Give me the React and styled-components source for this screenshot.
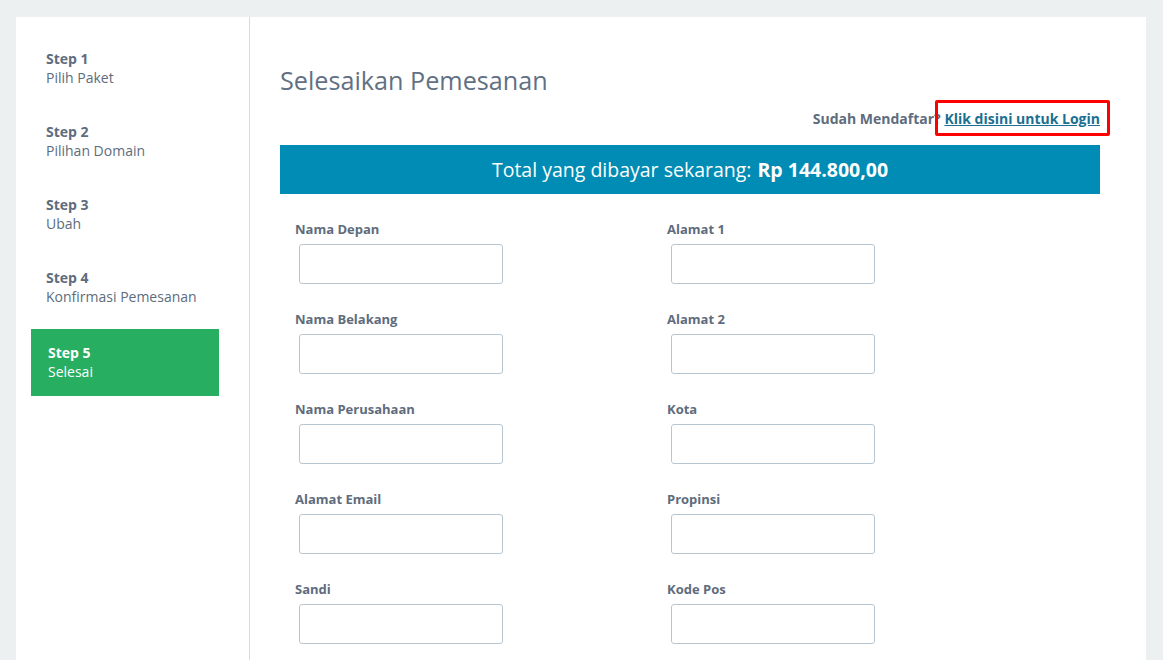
import styled, { createGlobalStyle } from "styled-components";

const GlobalStyle = createGlobalStyle`
    html, body {
        margin: 0;
        padding: 0;
        background-color: #ecf0f1;
        font-family: "Open Sans", "Noto Sans", "Liberation Sans", sans-serif;
        color: #5e6c7d;
    }
    * {
        box-sizing: border-box;
    }
`;

const Page = styled.div`
    padding: 17px 17px 0 16px;
    height: 660px;
    overflow: hidden;
`;
const Panel = styled.div`
    display: flex;
    background-color: #fff;
    min-height: 643px;
`;
const Sidebar = styled.nav`
    width: 234px;
    flex-shrink: 0;
    border-right: 1px solid #d8dadb;
    padding-top: 17px;
`;
const StepItem = styled.div`
    margin: ${(props) => props.$active ? '9px 15px 6px' : '0 15px 6px'};
    padding: ${(props) => props.$active ? '14px 17px 15px' : '15px 15px 14px'};
    width: 188px;
    height: 67px;
    background-color: ${(props) => props.$active ? '#27ae60' : 'transparent'};
    color: ${(props) => props.$active ? '#fff' : '#5e6c7d'};
    font-size: 14px;
    line-height: 19px;
`;
const StepNum = styled.div`
    font-weight: 700;
`;
const Main = styled.main`
    flex: 1;
    padding: 45px 46px 0 30px;
`;
const Title = styled.h1`
    margin: 0;
    font-size: 25.2px;
    font-weight: 400;
    line-height: 36px;
    color: #627083;
`;
const LoginRow = styled.div`
    margin-top: 11px;
    text-align: right;
    font-size: 14px;
    line-height: 20px;
    font-weight: 700;
    color: #5e6c7d;
`;
const LoginLink = styled.a`
    position: relative;
    color: #1a6f92;
    text-decoration: underline;
    &::after {
        content: '';
        position: absolute;
        top: -9px;
        bottom: -8px;
        left: -9px;
        right: -10px;
        border: 3px solid #f00;
        border-radius: 2px;
    }
`;
const TotalBar = styled.div`
    margin-top: 16px;
    height: 49px;
    background-color: #008cb4;
    color: #fff;
    font-size: 19.5px;
    display: flex;
    align-items: center;
    justify-content: center;
    & > b {
        font-weight: 700;
        margin-left: 6px;
    }
`;
const Form = styled.form`
    display: grid;
    grid-template-columns: 372px 372px;
    row-gap: 26px;
    padding: 26px 15px 0;
`;
const Field = styled.div`
    display: flex;
    flex-direction: column;
    align-items: flex-start;
`;
const Label = styled.label`
    font-size: 13px;
    font-weight: 700;
    line-height: 18px;
    color: #5e6c7d;
    margin-bottom: 6px;
`;
const Input = styled.input`
    margin-left: 4px;
    width: 204px;
    height: 40px;
    border: 1px solid #b8c6d1;
    border-radius: 3px;
    background: #fff;
    outline: none;
`;

const steps = [
    { num: 'Step 1', name: 'Pilih Paket' },
    { num: 'Step 2', name: 'Pilihan Domain' },
    { num: 'Step 3', name: 'Ubah' },
    { num: 'Step 4', name: 'Konfirmasi Pemesanan' },
    { num: 'Step 5', name: 'Selesai', active: true },
];

const fields = [
    'Nama Depan', 'Alamat 1',
    'Nama Belakang', 'Alamat 2',
    'Nama Perusahaan', 'Kota',
    'Alamat Email', 'Propinsi',
    'Sandi', 'Kode Pos',
];

export default function App() {
    return (
        <>
            <GlobalStyle />
            <Page>
                <Panel>
                    <Sidebar>
                        {steps.map((step) => (
                            <StepItem key={step.num} $active={step.active}>
                                <StepNum>{step.num}</StepNum>
                                <div>{step.name}</div>
                            </StepItem>
                        ))}
                    </Sidebar>
                    <Main>
                        <Title>Selesaikan Pemesanan</Title>
                        <LoginRow>
                            Sudah Mendaftar? <LoginLink href="#">Klik disini untuk Login</LoginLink>
                        </LoginRow>
                        <TotalBar>
                            Total yang dibayar sekarang: <b>Rp 144.800,00</b>
                        </TotalBar>
                        <Form>
                            {fields.map((f) => (
                                <Field key={f}>
                                    <Label>{f}</Label>
                                    <Input type="text" />
                                </Field>
                            ))}
                        </Form>
                    </Main>
                </Panel>
            </Page>
        </>
    );
}
